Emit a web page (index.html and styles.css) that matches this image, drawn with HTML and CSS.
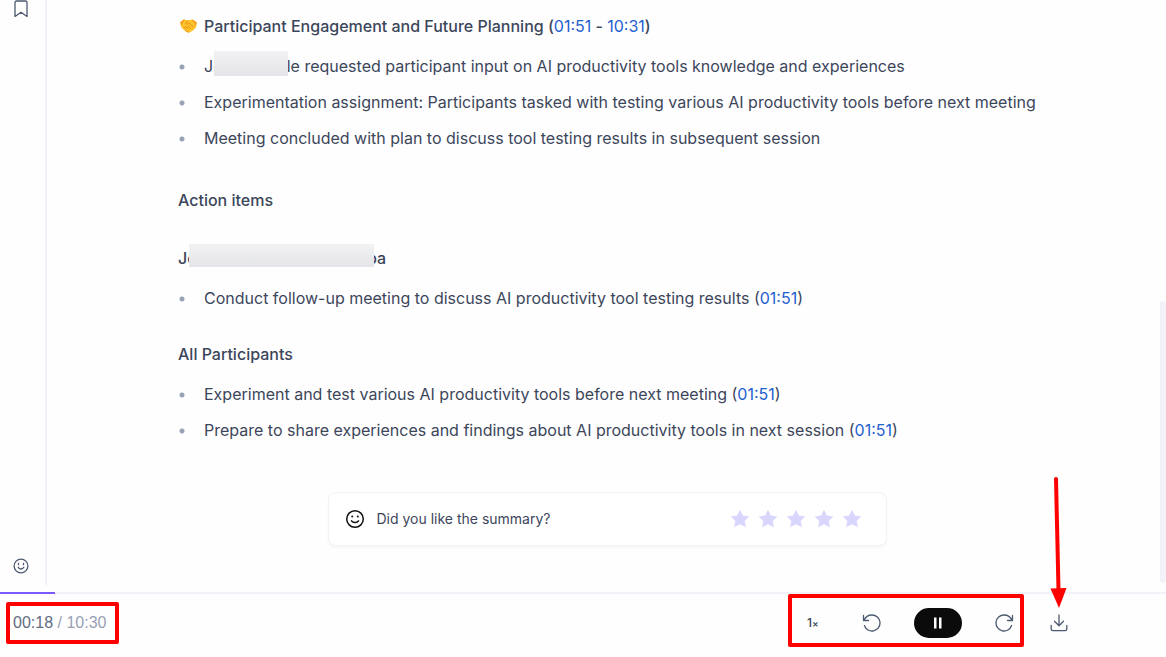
FILE: index.html
```html
<!doctype html>
<html lang="en">
  <head>
    <meta charset="UTF-8" />
    <meta name="viewport" content="width=device-width, initial-scale=1.0" />
    <title>Meeting summary</title>
    <link rel="stylesheet" href="styles.css">
  </head>
  <body>
    <div class="app">
      <div class="shell">
        <nav class="sidebar">
          <button class="icon-btn" aria-label="Bookmarks">
            <svg width="16" height="18" viewBox="0 0 16 18"><path d="M3.5 1h9a1.5 1.5 0 0 1 1.5 1.5v14L8 12.300l-6 4.200v-14A1.500 1.500 0 0 1 3.500 1z" /></svg>
          </button>
          <button class="icon-btn" aria-label="Feedback">
            <svg width="16" height="16" viewBox="0 0 16 16"><circle cx="8" cy="8" r="6.900" /><path d="M5.200 9.300c.6 1.200 1.600 1.700 2.800 1.700s2.200-.5 2.800-1.700M5.500 5.500v1.200M10.500 5.500v1.200" /></svg>
          </button>
        </nav>
        <main class="main">
          <article class="summary">
            <h3 class="topic">
              <svg class="emoji" width="17" height="14" viewBox="0 0 17 14">
                <path d="M.3 3.200 3.800.500 8 1.300l4.500-.8 4.200 3-.7 4.700-2.400 2.800L9.800 13.600 6.300 13 1.500 8.700z" fill="#ffc32b" />
                <path d="M.3 3.200 3.800.500l1 .3L1.700 5.500l-.4 2.400zM16.700 3.500 12.500.5l-.8.300L15 5l.9 2.700z" fill="#f29a1f" />
                <path d="M8 1.800 5.800 4.500c.8 1 2.200.5 3-.6l4.700 4.200M4 8.200l1.700 1.700M6 7.500l2.200 2.200M8.200 7l2.500 2.500M5.600 11.500l2.600 1.700" fill="none" stroke="#e8901a" stroke-linecap="round" />
              </svg>
              <span>Participant Engagement and Future Planning (<a href="#">01:51</a> - <a href="#">10:31</a>)</span>
            </h3>
            <ul class="points">
              <li>Jo<span class="mask mask-short"></span>le requested participant input on AI productivity tools knowledge and experiences</li>
              <li>Experimentation assignment: Participants tasked with testing various AI productivity tools before next meeting</li>
              <li>Meeting concluded with plan to discuss tool testing results in subsequent session</li>
            </ul>
            <h2 class="section-title">Action items</h2>
            <h3 class="person">Jo<span class="mask mask-long"></span>ba</h3>
            <ul class="points">
              <li>Conduct follow-up meeting to discuss AI productivity tool testing results (<a href="#">01:51</a>)</li>
            </ul>
            <h3 class="group">All Participants</h3>
            <ul class="points">
              <li>Experiment and test various AI productivity tools before next meeting (<a href="#">01:51</a>)</li>
              <li>Prepare to share experiences and findings about AI productivity tools in next session (<a href="#">01:51</a>)</li>
            </ul>
            <section class="rating">
              <svg class="face" width="20" height="20" viewBox="0 0 20 20"><circle cx="10" cy="10" r="8.300" /><path d="M6.500 11.800c.8 1.200 2 1.800 3.500 1.800s2.700-.6 3.500-1.800" /><circle class="eye" cx="7.200" cy="7.500" r="1" /><circle class="eye" cx="12.800" cy="7.500" r="1" /></svg>
              <span class="question">Did you like the summary?</span>
              <div class="stars">
                <button aria-label="1 star"><svg width="20" height="20" viewBox="0 0 20 20"><path d="m10 .8 2.900 5.700 6.400.9-4.600 4.500 1.200 6.400L10 15.300l-5.900 3 1.200-6.400L.7 7.400l6.400-.9z" /></svg></button>
                <button aria-label="2 stars"><svg width="20" height="20" viewBox="0 0 20 20"><path d="m10 .8 2.900 5.700 6.400.9-4.600 4.500 1.200 6.400L10 15.300l-5.900 3 1.200-6.400L.7 7.400l6.400-.9z" /></svg></button>
                <button aria-label="3 stars"><svg width="20" height="20" viewBox="0 0 20 20"><path d="m10 .8 2.900 5.700 6.400.9-4.600 4.500 1.200 6.400L10 15.300l-5.900 3 1.200-6.400L.7 7.400l6.400-.9z" /></svg></button>
                <button aria-label="4 stars"><svg width="20" height="20" viewBox="0 0 20 20"><path d="m10 .8 2.900 5.700 6.400.9-4.600 4.500 1.200 6.400L10 15.300l-5.900 3 1.200-6.400L.7 7.400l6.400-.9z" /></svg></button>
                <button aria-label="5 stars"><svg width="20" height="20" viewBox="0 0 20 20"><path d="m10 .8 2.900 5.700 6.400.9-4.600 4.500 1.200 6.400L10 15.300l-5.900 3 1.200-6.400L.7 7.400l6.400-.9z" /></svg></button>
              </div>
            </section>
          </article>
          <div class="scroll-thumb"></div>
        </main>
      </div>
      <footer class="player">
        <div class="track"><div class="played" style="width: 4.7%"></div></div>
        <div class="bar">
          <div class="time"><span class="now">00:18</span> / 10:30</div>
          <div class="controls">
            <button class="speed">1<span>×</span></button>
            <button class="icon-btn" aria-label="Rewind">
              <svg width="20" height="18" viewBox="0 0 20 18"><path d="M1.500 1.500v5h5M2 6.300C3.300 3.200 6.300 1 10 1a8 8 0 1 1-7.600 10.500" /></svg>
            </button>
            <button class="pause" aria-label="Pause">
              <svg width="10" height="12" viewBox="0 0 10 12"><path d="M1 .5h2.500v11H1zM6 .5h2.500v11H6z" /></svg>
            </button>
            <button class="icon-btn" aria-label="Forward">
              <svg width="20" height="18" viewBox="0 0 20 18"><path d="M18.500 1.500v5h-5M18 6.300C16.700 3.200 13.700 1 10 1a8 8 0 1 0 7.600 10.500" /></svg>
            </button>
          </div>
          <div class="download">
            <button class="icon-btn" aria-label="Download">
              <svg width="18" height="18" viewBox="0 0 18 18"><path d="M9 1v10.500M4.500 7.200 9 11.700l4.500-4.500M1.200 11.500v3.500c0 1 .6 1.600 1.600 1.600h12.400c1 0 1.600-.6 1.600-1.600v-3.500" /></svg>
            </button>
            <svg class="arrow" width="18" height="132" viewBox="0 0 18 132"><path d="M6 3 8.500 114" stroke="#f00" stroke-width="4" stroke-linecap="round" /><path d="M.5 112.500 16.500 112 9 132z" fill="#f00" /></svg>
          </div>
        </div>
      </footer>
    </div>
  </body>
</html>
```

FILE: styles.css
```css
* {
  box-sizing: border-box;
}
body {
  margin: 0;
  background: #fefefe;
  color: #3c465b;
  font: 16px/24px Inter, "Liberation Sans", sans-serif;
}
h2,
h3,
ul {
  margin: 0;
  padding: 0;
  font-size: 16px;
}
h2,
h3 {
  font-weight: 500;
}
a {
  color: #1f5fd0;
  font-weight: 400;
  text-decoration: none;
}
button {
  margin: 0;
  padding: 0;
  border: 0;
  background: none;
  font: inherit;
  color: inherit;
  cursor: pointer;
}
svg {
  display: block;
}
.app {
  min-height: 100vh;
  display: flex;
  flex-direction: column;
}
.shell {
  flex: 1;
  display: flex;
  gap: 1px;
}
.sidebar {
  width: 47px;
  margin-bottom: 7px;
  padding: 0 3px 11px 0;
  border-right: 2px solid #f1f1f8;
  display: flex;
  flex-direction: column;
  justify-content: space-between;
  align-items: center;
}
.icon-btn svg {
  fill: none;
  stroke: #4d5a70;
  stroke-width: 1.3;
  stroke-linecap: round;
  stroke-linejoin: round;
}
.main {
  flex: 1;
  position: relative;
  padding: 14px 0 40px;
}
.summary {
  max-width: 858px;
  margin: 0 auto;
}
.topic {
  display: flex;
  align-items: center;
  gap: 7px;
}
.emoji {
  margin-left: 2px;
}
.points {
  margin-top: 16px;
  list-style: none;
  display: flex;
  flex-direction: column;
  gap: 12px;
}
.points li {
  padding-left: 26px;
  background: radial-gradient(circle at 4px 13px, #97a2b5 2px, transparent 3px) no-repeat;
}
.section-title {
  margin-top: 38px;
}
.person {
  margin-top: 34px;
}
.group {
  margin-top: 32px;
}
/* hidden part of a participant name */
.mask {
  display: inline-block;
  position: relative;
  vertical-align: middle;
  background: linear-gradient(#f2f2f4, #e4e5e8);
}
.mask-short {
  width: 74px;
  height: 25px;
  margin: -7px -1px 1px -9px;
}
.mask-long {
  width: 185px;
  height: 23px;
  margin: -7px -7px 1px -8px;
}
.rating {
  max-width: 559px;
  height: 54px;
  margin: 50px auto 0;
  padding: 0 24px 0 16px;
  display: flex;
  align-items: center;
  border: 1px solid #f3f3f5;
  border-radius: 8px;
  background: #fff;
  box-shadow: 0 2px 3px #00000009;
}
.face {
  fill: none;
  stroke: #111;
  stroke-width: 1.5;
  stroke-linecap: round;
}
.face .eye {
  fill: #111;
  stroke: none;
}
.question {
  margin-left: 12px;
  font-size: 14px;
}
.stars {
  margin-left: auto;
  display: flex;
  gap: 8px;
}
.stars svg {
  fill: #d9d6fe;
}
.scroll-thumb {
  position: absolute;
  right: 0;
  bottom: 9px;
  width: 6px;
  height: 282px;
  border-radius: 3px;
  background: #f2f2f8;
}
.track {
  height: 2px;
  background: #f1f1f8;
}
.played {
  height: 2px;
  background: #7a5af8;
}
.bar {
  min-height: 63px;
  padding: 0 98px 0 6px;
  display: flex;
  align-items: flex-start;
}
.time {
  margin-top: 8px;
  padding: 5px 9px 5px 3px;
  border: 4px solid #f00;
  border-radius: 2px;
  font-family: "Liberation Sans", Arial, sans-serif;
  color: #98a1b5;
}
.now {
  color: #606b80;
}
.controls {
  height: 53px;
  margin-left: auto;
  padding: 4px 6px 0 15px;
  border: 4px solid #f00;
  border-radius: 2px;
  display: flex;
  align-items: center;
}
.speed {
  width: 12px;
  margin-right: 43px;
  display: flex;
  font-size: 12px;
  font-weight: 500;
  color: #344054;
}
.speed span {
  font-size: 10px;
}
.pause {
  width: 48px;
  height: 30px;
  margin: 0 32px;
  display: flex;
  align-items: center;
  justify-content: center;
  border-radius: 15px;
  background: #0b0b0b;
}
.pause svg {
  fill: #fff;
}
.download {
  position: relative;
  margin: 20px 0 0 26px;
}
.arrow {
  position: absolute;
  left: 0;
  bottom: 30px;
  fill: none;
}
```
